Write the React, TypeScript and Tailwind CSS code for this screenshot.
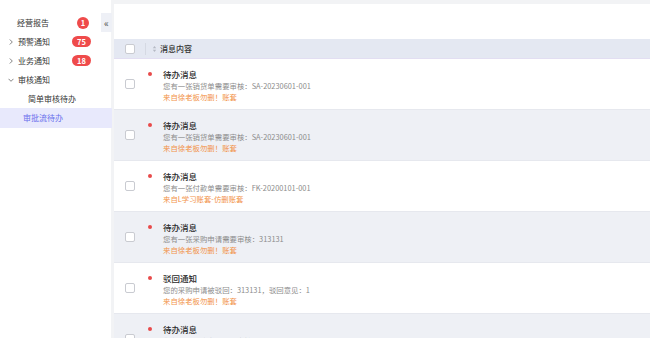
import React from "react";

const font = { fontFamily: '"Noto Sans CJK SC", "Noto Sans", sans-serif' };

type Row = { title: string; desc: string; from: string };

const rows: Row[] = [
  { title: "待办消息", desc: "您有一张销货单需要审核：SA-20230601-001", from: "来自徐老板勿删！账套" },
  { title: "待办消息", desc: "您有一张销货单需要审核：SA-20230601-001", from: "来自徐老板勿删！账套" },
  { title: "待办消息", desc: "您有一张付款单需要审核：FK-20200101-001", from: "来自L学习账套-仿删账套" },
  { title: "待办消息", desc: "您有一张采购申请需要审核：313131", from: "来自徐老板勿删！账套" },
  { title: "驳回通知", desc: "您的采购申请被驳回：313131，驳回意见：1", from: "来自徐老板勿删！账套" },
  { title: "待办消息", desc: "您有一张采购申请需要审核：313131", from: "来自徐老板勿删！账套" },
];

function Checkbox() {
  return <div className="w-[10px] h-[10px] border border-[#c9cbd1] rounded-[2px] bg-white" />;
}

function Badge({ n }: { n: string }) {
  return (
    <span
      className={`ml-auto ${n.length > 1 ? "h-[11px] px-[3px] min-w-[19px]" : "w-[12px] h-[12px]"} rounded-full bg-[#ef4b4b] text-white text-[7.5px] font-bold leading-none flex items-center justify-center`}
    >
      {n}
    </span>
  );
}

function Chevron({ down }: { down?: boolean }) {
  return (
    <svg width="6" height="6" viewBox="0 0 6 6" className="absolute left-[8px]">
      {down ? (
        <path d="M0.5 1.8 L3 4.3 L5.5 1.8" fill="none" stroke="#666" strokeWidth="0.8" />
      ) : (
        <path d="M1.8 0.5 L4.3 3 L1.8 5.5" fill="none" stroke="#666" strokeWidth="0.8" />
      )}
    </svg>
  );
}

export default function App() {
  return (
    <div className="w-[650px] h-[338px] bg-[#f2f3f5] flex overflow-hidden" style={font}>
      {/* Sidebar */}
      <div className="w-[111px] h-full bg-white relative pt-[13px] text-[8px] text-[#333]">
        <div className="h-[19px] flex items-center pl-[17px] pr-[22px] relative">
          <span>经营报告</span>
          <Badge n="1" />
        </div>
        <div className="h-[19px] flex items-center pl-[18px] pr-[20px] relative">
          <Chevron />
          <span>预警通知</span>
          <Badge n="75" />
        </div>
        <div className="h-[19px] flex items-center pl-[18px] pr-[20px] relative">
          <Chevron />
          <span>业务通知</span>
          <Badge n="18" />
        </div>
        <div className="h-[19px] flex items-center pl-[18px] relative">
          <Chevron down />
          <span>审核通知</span>
        </div>
        <div className="h-[19px] flex items-center pl-[28px]">
          <span>简单审核待办</span>
        </div>
        <div className="h-[20px] flex items-center pl-[23px] bg-[#e8e9fc] text-[#6a70ec] w-[112px]">
          <span>审批流待办</span>
        </div>
        <div className="absolute right-[-1px] top-[13px] w-[11px] h-[19px] bg-[#eef0f6] flex items-center justify-center text-[10px] text-[#555] leading-none">
          «
        </div>
      </div>

      {/* Main */}
      <div className="flex-1 ml-[3px] mt-[4px] bg-white flex flex-col overflow-hidden">
        <div className="h-[35px] shrink-0" />
        <div className="h-[20px] shrink-0 bg-[#e4e8f2] border-b border-[#e2def2] flex items-center text-[8px] text-[#333] font-medium">
          <div className="w-[31px] flex justify-center">
            <Checkbox />
          </div>
          <div className="w-px h-[12px] bg-[#d5d9e3]" />
          <div className="flex items-center pl-[6px]">
            <svg width="5" height="8" viewBox="0 0 5 8" className="mr-[3px]">
              <path d="M2.5 1 L4.2 3.2 L0.8 3.2 Z" fill="#b5b9c4" />
              <path d="M2.5 7 L4.2 4.8 L0.8 4.8 Z" fill="#b5b9c4" />
            </svg>
            <span>消息内容</span>
          </div>
        </div>
        {rows.map((r, i) => (
          <div
            key={i}
            className={`h-[51px] shrink-0 flex border-b border-[#e6e8ee] ${i % 2 === 1 ? "bg-[#eef0f5]" : "bg-white"}`}
          >
            <div className="w-[31px] flex items-center justify-center">
              <Checkbox />
            </div>
            <div className="w-[18px] pt-[13px] pl-[3px]">
              <div className="w-[4px] h-[4px] rounded-full bg-[#e84a4a]" />
            </div>
            <div className="pt-[9px]">
              <div className="text-[8.5px] leading-[12px] text-[#2b2b2b] font-medium">{r.title}</div>
              <div className="text-[7.4px] leading-[11px] text-[#8c8c8c]">{r.desc}</div>
              <div className="text-[7.4px] leading-[11px] text-[#f2934a]">{r.from}</div>
            </div>
          </div>
        ))}
      </div>
    </div>
  );
}
